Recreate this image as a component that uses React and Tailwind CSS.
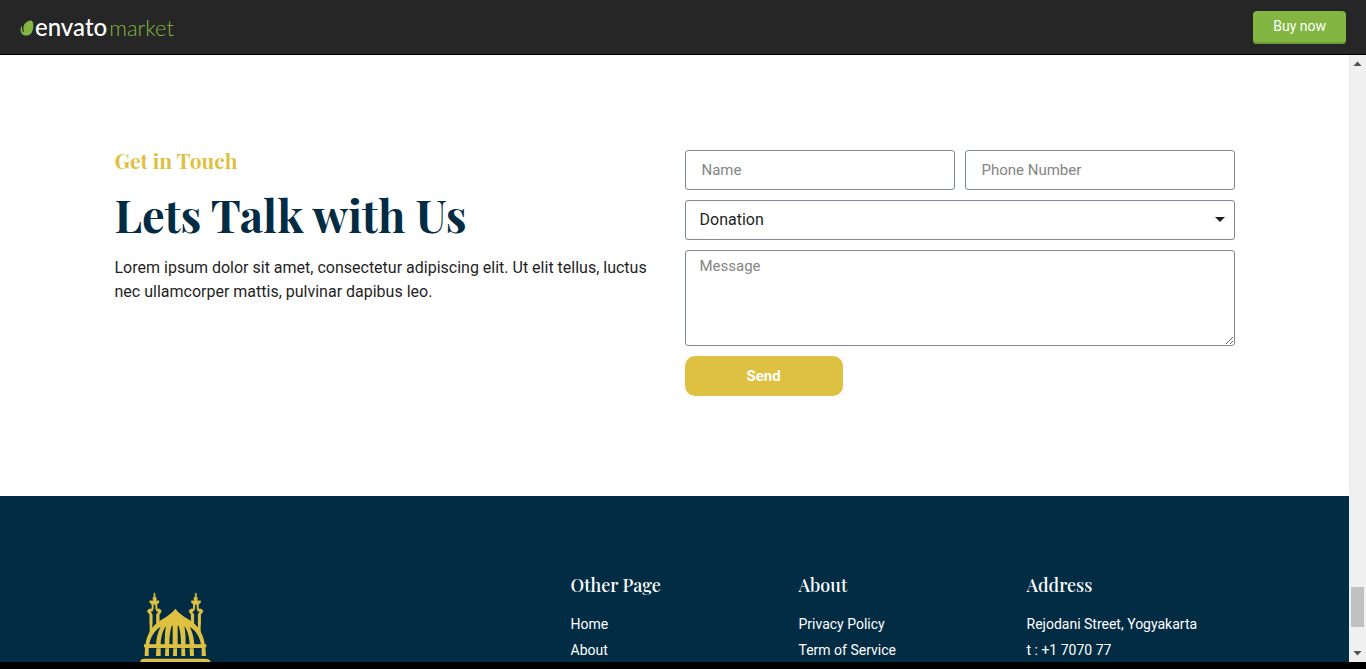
import React from "react";

const serif = "font-['Playfair_Display','Liberation_Serif',serif]";

const footerColumns = [
  { title: "Other Page", links: ["Home", "About"] },
  { title: "About", links: ["Privacy Policy", "Term of Service"] },
];

function EnvatoLogo() {
  return (
    <a href="#market" aria-label="envato market" className="flex items-center font-['Lato',sans-serif] text-2xl leading-8">
      <svg viewBox="0 0 39 48" className="mt-0.5 h-4 w-[14px]" aria-hidden="true">
        <path
          d="M34 2C29-1 15 5 11 14c-3 7-3 14-1 21 0 2-1 2-2 1-3-4-4-10-3-16 0-2-1-2-2-1C-1 25-1 34 4 41c6 7 18 8 26 1C40 33 41 8 34 2Z"
          fill="#82b541"
        />
      </svg>
      <span className="ml-px flex items-baseline gap-0.5">
        <span className="font-medium text-white">envato</span>
        <span className="text-[22px] font-light text-[#82b541]">market</span>
      </span>
    </a>
  );
}

function Minaret() {
  return (
    <g fill="#dfc141" stroke="#dfc141">
      <path d="M102 39h3l1 12 4 3-2 8h9v6l-5 3v3H94v-3l-5-3v-6h11l-2-8 3-3Z" />
      <path d="M98 74v14M109 74v14" strokeWidth="6" />
      <path d="M83 96v-5l5-4h10v6h-5v5l3 5v30h-6v-29Z" strokeWidth="2" />
      <path d="M123 96v-5l-5-4h-9v6h5v5l-4 5v30h7v-29Z" strokeWidth="2" />
      <path d="M93 103v54M114 103v36" strokeWidth="8" />
    </g>
  );
}

function MosqueLogo() {
  return (
    <svg viewBox="57 36 219 231" className="h-[77px] w-[73px]" role="img" aria-label="Mosque">
      <Minaret />
      <g transform="translate(331 0) scale(-1 1)">
        <Minaret />
      </g>
      <path
        d="M166 86C157 98 143 108 127 118C98 135 80 160 76 198H255C251 160 234 135 205 118C189 108 175 98 166 86Z"
        fill="#dfc141"
      />
      <g fill="#022c43">
        <path d="M88 194C92 170 102 153 122 140C113 156 109 175 108 194Z" />
        <path d="M122 194C123 173 127 153 138 139C135 154 134 175 134 194Z" />
        <path d="M148 194C148 171 150 153 155 137L158 137V194Z" />
        <path d="M243 194C239 170 229 153 209 140C218 156 222 175 223 194Z" />
        <path d="M209 194C208 173 204 153 193 139C196 154 197 175 197 194Z" />
        <path d="M183 194C183 171 181 153 176 137L173 137V194Z" />
      </g>
      <g fill="#dfc141">
        <path d="M72 193H259V202H256L258 228H245V204H86V228H74L75 202H72Z" />
        <path d="M109 205H122V228H108ZM136 205H147V228H135ZM160 205H171V228H159ZM184 205H195L196 228H184ZM209 205H221L222 228H210Z" />
        <path d="M61 267V243Q63 236 72 236H259Q269 237 271 243V267Z" />
      </g>
    </svg>
  );
}

function PageScrollbar() {
  return (
    <div aria-hidden="true" className="flex w-[17px] shrink-0 flex-col items-center bg-[#f0f0f0]">
      <svg viewBox="0 0 17 17" className="size-[17px]">
        <path d="M8.500 6.500l4 4.500h-8Z" fill="#505050" />
      </svg>
      <div className="flex-[515]" />
      <div className="h-10 w-[13px] bg-[#c1c1c1]" />
      <div className="flex-[18]" />
      <svg viewBox="0 0 17 17" className="size-[17px]">
        <path d="M4.500 6h8l-4 4.500Z" fill="#505050" />
      </svg>
    </div>
  );
}

const field =
  "w-full rounded-[3px] border border-[#7f8893] bg-white text-[#1f1f1f] outline-none placeholder:text-[#858585]";

function ContactForm() {
  return (
    <form className="grid grid-cols-2 gap-[10px]" onSubmit={(e) => e.preventDefault()}>
      <input aria-label="Name" placeholder="Name" className={`${field} h-10 px-4 text-[15px]`} />
      <input aria-label="Phone Number" type="tel" placeholder="Phone Number" className={`${field} h-10 px-4 text-[15px]`} />
      <div className="relative col-span-2">
        <select aria-label="Subject" className={`${field} block h-10 appearance-none px-[14px] text-base`}>
          <option>Donation</option>
        </select>
        <svg viewBox="0 0 10 5" className="pointer-events-none absolute top-[17px] right-[10px] h-[5px] w-[10px]" aria-hidden="true">
          <path d="M0 0h10L5 5Z" fill="#1f1f1f" />
        </svg>
      </div>
      <textarea
        aria-label="Message"
        placeholder="Message"
        className={`${field} col-span-2 block h-24 resize-y px-[14px] py-1 text-[15px] leading-[22px]`}
      />
      <button type="submit" className="h-10 w-[158px] rounded-[10px] bg-[#dfc141] text-[15px] font-bold text-white">
        Send
      </button>
    </form>
  );
}

export default function App() {
  return (
    <div className="flex h-screen flex-col overflow-hidden bg-black font-['Roboto',sans-serif]">
      <header className="flex h-[55px] shrink-0 items-center justify-between border-b border-black bg-[#262626] px-5">
        <EnvatoLogo />
        <a
          href="#buy"
          className="rounded bg-[#82b541] px-5 pt-[5px] pb-[7px] text-sm leading-[21px] text-white shadow-[inset_0_-2px_0_#6f9a37]"
        >
          Buy now
        </a>
      </header>

      <div className="mb-[7px] flex min-h-0 flex-1">
        <main className="min-w-0 flex-1 overflow-hidden bg-[#022c43]">
          <section className="bg-white pt-[95px] pb-[100px]">
            <div className="mx-auto grid max-w-[1120px] grid-cols-2 gap-5">
              <div>
                <h2 className={`${serif} text-[21px] leading-5 font-bold text-[#dfc141]`}>Get in Touch</h2>
                <h1 className={`${serif} mt-5 text-[45px] leading-[48px] font-bold text-[#022c43]`}>Lets Talk with Us</h1>
                <p className="mt-[18px] text-base leading-6 text-[#1f1f1f]">
                  Lorem ipsum dolor sit amet, consectetur adipiscing elit. Ut elit tellus, luctus nec ullamcorper mattis,
                  pulvinar dapibus leo.
                </p>
              </div>
              <ContactForm />
            </div>
          </section>

          <footer className="pt-20 text-white">
            <div className="mx-auto grid max-w-[1140px] grid-cols-5">
              <div className="col-span-2 px-[34px] pt-4">
                <MosqueLogo />
              </div>
              {footerColumns.map((column) => (
                <nav key={column.title} aria-label={column.title} className="px-[10px]">
                  <h3 className={`${serif} text-lg leading-[18px] font-medium`}>{column.title}</h3>
                  <ul className="mt-[17px] text-sm leading-[26px]">
                    {column.links.map((link) => (
                      <li key={link}>
                        <a href="#page">{link}</a>
                      </li>
                    ))}
                  </ul>
                </nav>
              ))}
              <div className="px-[10px]">
                <h3 className={`${serif} text-lg leading-[18px] font-medium`}>Address</h3>
                <address className="mt-[17px] text-sm leading-[26px] not-italic">
                  Rejodani Street, Yogyakarta
                  <br />t : +1 7070 77
                </address>
              </div>
            </div>
          </footer>
        </main>
        <PageScrollbar />
      </div>
    </div>
  );
}
